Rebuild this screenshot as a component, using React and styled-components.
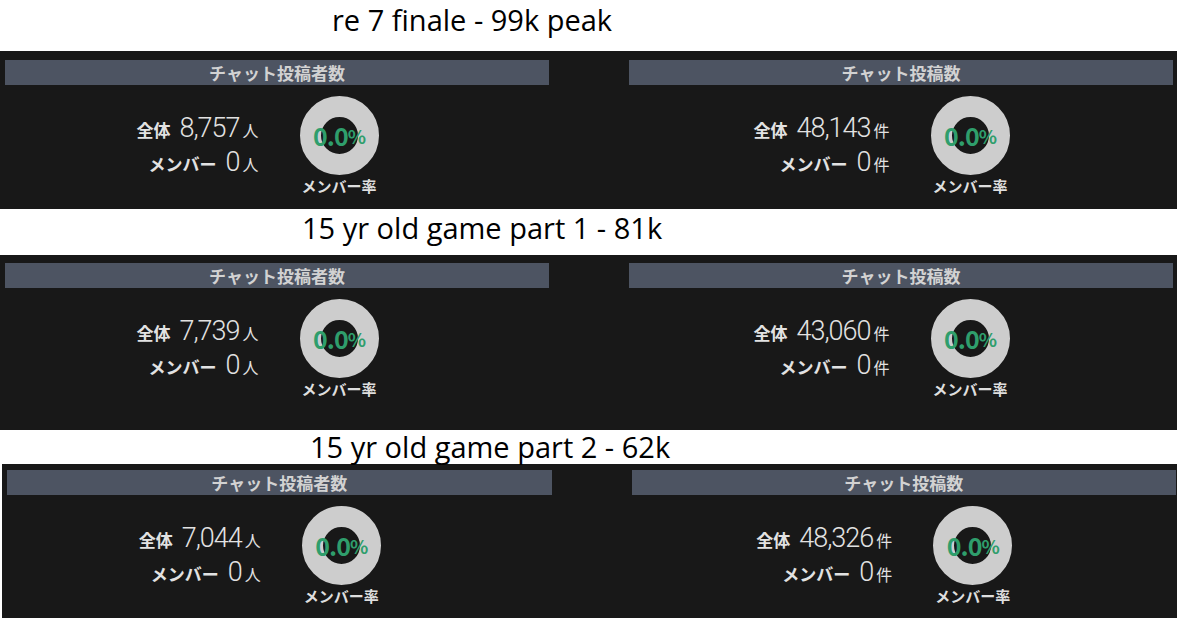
import React from 'react';
import styled, { createGlobalStyle, css } from 'styled-components';

const GlobalStyle = createGlobalStyle`
  html, body {
    margin: 0;
    padding: 0;
    background: #ffffff;
  }
  body {
    font-family: "Noto Sans CJK JP", "Noto Sans", sans-serif;
  }
`;

const sections = [
  {
    title: 're 7 finale - 99k peak',
    titleHeight: 51,
    titleTop: 3,
    titleLeft: 332,
    pad: [9, 14],
    shift: 0,
    posters: '8,757',
    posts: '48,143',
  },
  {
    title: '15 yr old game part 1 - 81k',
    titleHeight: 46,
    titleTop: 2,
    titleLeft: 302,
    pad: [8, 32],
    shift: 0,
    posters: '7,739',
    posts: '43,060',
  },
  {
    title: '15 yr old game part 2 - 62k',
    titleHeight: 34,
    titleTop: 0,
    titleLeft: 310,
    pad: [6, 16],
    shift: 2,
    posters: '7,044',
    posts: '48,326',
  },
];

const Donut = () => (
  <svg width="79" height="79" viewBox="0 0 79 79">
    <circle cx="39.5" cy="39.5" r="29" fill="none" stroke="#cdcdcd" strokeWidth="21" />
  </svg>
);

const StatCard = ({ heading, total, unit }) => (
  <Card>
    <CardHeader>{heading}</CardHeader>
    <CardBody>
      <Stats>
        <StatRow>
          <StatLabel>全体</StatLabel>
          <StatNumber>{total}</StatNumber>
          <StatUnit>{unit}</StatUnit>
        </StatRow>
        <StatRow>
          <StatLabel>メンバー</StatLabel>
          <StatNumber>0</StatNumber>
          <StatUnit>{unit}</StatUnit>
        </StatRow>
      </Stats>
      <Figure>
        <Ring>
          <Donut />
          <Rate>
            0.0<Pct>%</Pct>
          </Rate>
        </Ring>
        <FigureLabel>メンバー率</FigureLabel>
      </Figure>
    </CardBody>
  </Card>
);

const App = () => (
  <Page>
    <GlobalStyle />
    {sections.map(s => (
      <Section key={s.title}>
        <Title height={s.titleHeight} top={s.titleTop} left={s.titleLeft}>
          {s.title}
        </Title>
        <Panel padTop={s.pad[0]} padBottom={s.pad[1]} shift={s.shift}>
          <StatCard heading="チャット投稿者数" total={s.posters} unit="人" />
          <StatCard heading="チャット投稿数" total={s.posts} unit="件" />
        </Panel>
      </Section>
    ))}
  </Page>
);

const Page = styled.div`
  width: 1177px;
  height: 618px;
  overflow: hidden;
  background: #ffffff;
`;

const Section = styled.section`
  display: flex;
  flex-direction: column;
`;

const Title = styled.div`
  box-sizing: border-box;
  height: ${p => p.height}px;
  padding-top: ${p => p.top}px;
  padding-left: ${p => p.left}px;
  font-family: "Open Sans", "Noto Sans", sans-serif;
  font-size: 29px;
  line-height: 34px;
  color: #000000;
  white-space: nowrap;
  position: relative;
  z-index: 1;
`;

const Panel = styled.div`
  display: grid;
  grid-template-columns: 1fr 1fr;
  column-gap: 80px;
  background: #181818;
  padding: ${p => p.padTop}px 4px ${p => p.padBottom}px 5px;
  ${p => p.shift && css`
    margin-left: ${p.shift}px;
    padding-right: 1px;
  `}
`;

const Card = styled.div`
  display: flex;
  flex-direction: column;
`;

const CardHeader = styled.div`
  height: 25px;
  background: #4d5462;
  color: #d2d2d2;
  font-size: 17px;
  font-weight: 700;
  line-height: 25px;
  text-align: center;
`;

const CardBody = styled.div`
  display: flex;
  align-items: center;
  justify-content: center;
  gap: 41px;
  padding: 11px 39px 0 0;
`;

const Stats = styled.div`
  display: flex;
  flex-direction: column;
  align-items: flex-end;
  color: #e2e2e2;
`;

const StatRow = styled.div`
  box-sizing: border-box;
  display: flex;
  align-items: baseline;
  height: 34px;
  padding-top: 3px;
  line-height: 1;
`;

const StatLabel = styled.span`
  font-size: 17px;
  font-weight: 700;
  margin-right: 9px;
`;

const StatNumber = styled.span`
  font-family: Roboto, "Noto Sans CJK JP", sans-serif;
  font-size: 27px;
  font-weight: 300;
  letter-spacing: -1px;
  margin-right: 3px;
`;

const StatUnit = styled.span`
  font-size: 16px;
  font-weight: 400;
`;

const Figure = styled.div`
  display: flex;
  flex-direction: column;
  align-items: center;
`;

const Ring = styled.div`
  position: relative;
  width: 79px;
  height: 79px;

  svg {
    display: block;
  }
`;

const Rate = styled.div`
  position: absolute;
  inset: 0;
  display: flex;
  align-items: center;
  justify-content: center;
  color: #2f9e6c;
  font-size: 25px;
  font-weight: 700;
  letter-spacing: -1px;
  line-height: 1;
`;

const Pct = styled.span`
  font-size: 19px;
`;

const FigureLabel = styled.div`
  margin-top: 2px;
  font-size: 15px;
  font-weight: 700;
  line-height: 18px;
  color: #dedede;
`;

export default App;
